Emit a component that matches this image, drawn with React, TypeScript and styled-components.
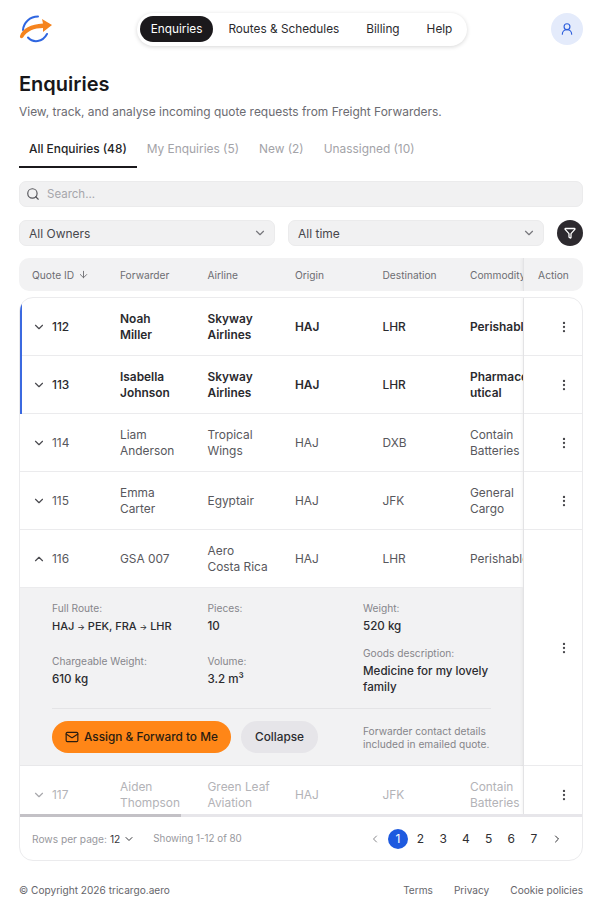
import React from 'react';
import styled, { createGlobalStyle } from 'styled-components';
import { ArrowDown, ChevronDown, ChevronLeft, ChevronRight, ChevronUp, Funnel, Mail, MoreVertical, Search, UserRound } from 'lucide-react';

const GlobalStyle = createGlobalStyle`
  * { box-sizing: border-box; }
  html, body { margin: 0; padding: 0; background: #fff; }
  body { font-family: Inter, "Open Sans", "Liberation Sans", sans-serif; color: #1f1f22; }
  button { font-family: inherit; }
`;

const Page = styled.div`
  width: 602px;
  height: 916px;
  padding: 13px 19px 0;
  overflow: hidden;
`;

const TopBar = styled.header`
  display: flex;
  align-items: center;
  justify-content: space-between;
  height: 32px;
`;

const Logo = styled.svg`
  width: 34px;
  height: 30px;
`;

const Nav = styled.nav`
  display: flex;
  align-items: center;
  height: 33px;
  padding: 0 15px 0 3px;
  background: #fff;
  border-radius: 17px;
  box-shadow: 0 1px 4px rgba(0, 0, 0, 0.16);
`;

const NavItem = styled.a<{ $active?: boolean }>`
  display: flex;
  align-items: center;
  height: 26px;
  padding: 0 11px;
  margin-right: ${({ $active }) => ($active ? '4px' : '5px')};
  border-radius: 13px;
  font-size: 11.8px;
  background: ${({ $active }) => ($active ? '#1b191c' : 'transparent')};
  color: ${({ $active }) => ($active ? '#fff' : '#2b2b2e')};
  &:last-child { margin-right: 0; padding-right: 0; }
`;

const Avatar = styled.div`
  display: flex;
  align-items: center;
  justify-content: center;
  width: 32px;
  height: 32px;
  border-radius: 50%;
  background: #e4ebfb;
  color: #2f5fdc;
`;

const Title = styled.h1`
  margin: 25px 0 0;
  font-size: 20px;
  line-height: 28px;
  font-weight: 600;
  color: #17171a;
`;

const Subtitle = styled.p`
  margin: 5px 0 0;
  font-size: 11.95px;
  line-height: 18px;
  color: #6c6c72;
`;

const Tabs = styled.div`
  display: flex;
  margin-top: 7px;
`;

const Tab = styled.div<{ $active?: boolean }>`
  height: 40px;
  padding: 11px 10px 0;
  line-height: 20px;
  font-size: 11.9px;
  border-bottom: 2px solid ${({ $active }) => ($active ? '#1b191c' : 'transparent')};
  color: ${({ $active }) => ($active ? '#232326' : '#a3a3a8')};
  font-weight: ${({ $active }) => ($active ? 500 : 400)};
`;

const SearchBox = styled.div`
  display: flex;
  align-items: center;
  gap: 7px;
  height: 26px;
  margin-top: 13px;
  padding: 0 6px;
  background: #f1f1f2;
  border: 1px solid #ebebec;
  border-radius: 7px;
  font-size: 11.5px;
  color: #a6a6ab;
  svg { color: #56565b; }
`;

const Filters = styled.div`
  display: flex;
  align-items: center;
  gap: 13px;
  margin-top: 13px;
`;

const SelectBox = styled.div`
  display: flex;
  flex: 0 0 256px;
  align-items: center;
  justify-content: space-between;
  height: 26px;
  padding: 0 7px 0 9px;
  background: #f1f1f2;
  border: 1px solid #ebebec;
  border-radius: 7px;
  font-size: 12px;
  color: #47474c;
  svg { color: #77777c; }
`;

const FilterButton = styled.button`
  display: flex;
  align-items: center;
  justify-content: center;
  width: 26px;
  height: 26px;
  padding: 0;
  border: none;
  border-radius: 50%;
  background: #2d2a2f;
  color: #fff;
`;

const HeaderBar = styled.div`
  display: flex;
  height: 33px;
  margin-top: 12px;
  background: #f2f2f3;
  border-radius: 10px;
  overflow: hidden;
`;

const HeaderScroll = styled.div`
  flex: 1;
  overflow: hidden;
  padding-left: 1px;
`;

const Columns = styled.div`
  display: grid;
  grid-template-columns: 88px repeat(5, 87.5px);
  width: 525.5px;
`;

const HeaderCell = styled.div`
  display: flex;
  align-items: center;
  gap: 4px;
  height: 33px;
  padding-left: 12px;
  font-size: 10.2px;
  color: #6d6d72;
  white-space: nowrap;
`;

const ActionHeader = styled.div`
  display: flex;
  flex: 0 0 60px;
  align-items: center;
  justify-content: center;
  border-left: 1px solid #e3e3e5;
  font-size: 10.2px;
  color: #6d6d72;
  box-shadow: -1px 0 3px rgba(0, 0, 0, 0.05);
`;

const Card = styled.section`
  margin-top: 6px;
  height: 564px;
  background: #fff;
  border: 1px solid #ebebed;
  border-radius: 14px;
  overflow: hidden;
`;

const TableArea = styled.div`
  display: flex;
  height: 516px;
  overflow: hidden;
`;

const TableMain = styled.div`
  flex: 0 0 503px;
  overflow: hidden;
`;

const Row = styled(Columns)<{ $unread?: boolean }>`
  position: relative;
  height: 58px;
  padding-top: 1px;
  align-items: center;
  border-bottom: 1px solid #ebebed;
  &::before {
    content: '';
    display: ${({ $unread }) => ($unread ? 'block' : 'none')};
    position: absolute;
    left: 0;
    top: 0;
    bottom: -1px;
    width: 2px;
    background: #3b69e0;
  }
`;

const Cell = styled.div<{ $weight?: number; $faded?: boolean }>`
  padding-left: 12px;
  font-size: 11.9px;
  line-height: 16px;
  white-space: nowrap;
  font-weight: ${({ $weight }) => $weight ?? 400};
  color: ${({ $weight, $faded }) => ($faded ? '#b3b3b7' : $weight ? '#2a2a2e' : '#58585d')};
`;

const IdCell = styled(Cell)`
  display: flex;
  align-items: center;
  gap: 6px;
  svg { color: ${({ $faded }) => ($faded ? '#a8a8ac' : '#4a4a4f')}; }
`;

const Panel = styled.div`
  width: 503px;
  height: 178px;
  padding: 12px 32px 0;
  background: #f2f2f3;
  border-bottom: 1px solid #e8e8ea;
`;

const DetailGrid = styled.div`
  display: grid;
  grid-template-columns: repeat(3, 128px);
  column-gap: 27.5px;
  row-gap: 11px;
  align-items: center;
`;

const DetailLabel = styled.div`
  font-size: 10.2px;
  line-height: 16px;
  color: #86868b;
`;

const DetailValue = styled.div`
  margin-top: 2px;
  font-size: 11.6px;
  line-height: 16px;
  font-weight: 500;
  color: #2b2b2f;
  white-space: nowrap;
`;

const RouteText = styled.span`
  font-size: 11px;
`;

const RouteArrow = styled.span`
  font-size: 8px;
  line-height: 0;
`;

const Divider = styled.div`
  height: 1px;
  margin: 13px 0 12px;
  background: #e4e4e6;
`;

const ActionsRow = styled(DetailGrid)`
  height: 32px;
`;

const ButtonGroup = styled.div`
  grid-column: span 2;
  display: flex;
  gap: 10px;
`;

const PrimaryButton = styled.button`
  display: flex;
  align-items: center;
  gap: 5px;
  width: 179px;
  height: 32px;
  padding: 0 0 0 13px;
  border: none;
  border-radius: 16px;
  background: #ff8617;
  color: #2a1c10;
  font-size: 11.8px;
  font-weight: 500;
  white-space: nowrap;
`;

const SecondaryButton = styled.button`
  width: 77px;
  height: 32px;
  padding: 0;
  border: none;
  border-radius: 16px;
  background: #e6e5e9;
  color: #2b2b2f;
  font-size: 11.8px;
  font-weight: 500;
`;

const Note = styled.div`
  padding-top: 1px;
  font-size: 10.2px;
  line-height: 13px;
  color: #85858a;
  white-space: nowrap;
`;

const ActionColumn = styled.div`
  flex: 0 0 60px;
  border-left: 1px solid #e3e3e5;
  box-shadow: -1px 0 3px rgba(0, 0, 0, 0.05);
`;

const ActionCell = styled.div<{ $height: number }>`
  display: flex;
  flex: none;
  align-items: center;
  justify-content: flex-end;
  height: ${({ $height }) => $height}px;
  padding-right: 12px;
  border-bottom: 1px solid #ebebed;
  color: #4a4a4e;
`;

const ScrollTrack = styled.div`
  height: 3px;
  background: #e7e6ea;
`;

const ScrollThumb = styled.div`
  width: 161px;
  height: 3px;
  background: #c3c1c6;
`;

const CardFooter = styled.div`
  display: flex;
  align-items: center;
  height: 43px;
  padding: 0 14px 0 12px;
  font-size: 10.2px;
  color: #98989d;
`;

const RowsPerPage = styled.div`
  display: flex;
  align-items: center;
  gap: 3px;
  strong { font-weight: 400; color: #37373b; }
  svg { color: #37373b; }
`;

const Showing = styled.div`
  margin-left: 18px;
  font-size: 9.8px;
`;

const Pagination = styled.div`
  display: flex;
  align-items: center;
  margin-left: auto;
`;

const PageLink = styled.div<{ $active?: boolean; $muted?: boolean }>`
  display: flex;
  align-items: center;
  justify-content: center;
  width: 22.7px;
  height: 20px;
  font-size: 12px;
  color: ${({ $active, $muted }) => ($active ? '#fff' : $muted ? '#88888c' : '#2f2f33')};
  span {
    display: flex;
    align-items: center;
    justify-content: center;
    width: 20px;
    height: 20px;
    border-radius: 50%;
    background: ${({ $active }) => ($active ? '#1e5adf' : 'transparent')};
  }
`;

const SiteFooter = styled.footer`
  display: flex;
  align-items: center;
  justify-content: space-between;
  margin-top: 21px;
  height: 16px;
  font-size: 10.1px;
  color: #66666b;
`;

const FooterLinks = styled.div`
  display: flex;
  gap: 21px;
`;

type Enquiry = {
  id: number;
  forwarder: string[];
  airline: string[];
  dest: string;
  commodity: string[];
  bold?: boolean;
  faded?: boolean;
  open?: boolean;
};

const enquiries: Enquiry[] = [
  { id: 112, forwarder: ['Noah', 'Miller'], airline: ['Skyway', 'Airlines'], dest: 'LHR', commodity: ['Perishable'], bold: true },
  { id: 113, forwarder: ['Isabella', 'Johnson'], airline: ['Skyway', 'Airlines'], dest: 'LHR', commodity: ['Pharmaceu', 'utical'], bold: true },
  { id: 114, forwarder: ['Liam', 'Anderson'], airline: ['Tropical', 'Wings'], dest: 'DXB', commodity: ['Contain', 'Batteries'] },
  { id: 115, forwarder: ['Emma', 'Carter'], airline: ['Egyptair'], dest: 'JFK', commodity: ['General', 'Cargo'] },
  { id: 116, forwarder: ['GSA 007'], airline: ['Aero', 'Costa Rica'], dest: 'LHR', commodity: ['Perishable'], open: true },
  { id: 117, forwarder: ['Aiden', 'Thompson'], airline: ['Green Leaf', 'Aviation'], dest: 'JFK', commodity: ['Contain', 'Batteries'], faded: true },
];

const Lines = ({ lines }: { lines: string[] }) => (
  <>
    {lines.map((line) => (
      <div key={line}>{line}</div>
    ))}
  </>
);

const EnquiryRow = ({ item }: { item: Enquiry }) => {
  const weight = item.bold ? 600 : undefined;
  return (
    <Row $unread={item.bold}>
      <IdCell $weight={item.bold ? 500 : undefined} $faded={item.faded}>
        {item.open ? <ChevronUp size={14} /> : <ChevronDown size={14} />}
        {item.id}
      </IdCell>
      <Cell $weight={weight} $faded={item.faded}><Lines lines={item.forwarder} /></Cell>
      <Cell $weight={weight} $faded={item.faded}><Lines lines={item.airline} /></Cell>
      <Cell $weight={weight} $faded={item.faded}>HAJ</Cell>
      <Cell $weight={item.bold ? 500 : undefined} $faded={item.faded}>{item.dest}</Cell>
      <Cell $weight={weight} $faded={item.faded}><Lines lines={item.commodity} /></Cell>
    </Row>
  );
};

const Detail = ({ label, children }: { label: string; children: React.ReactNode }) => (
  <div>
    <DetailLabel>{label}</DetailLabel>
    <DetailValue>{children}</DetailValue>
  </div>
);

export default function App() {
  return (
    <Page>
      <GlobalStyle />
      <TopBar>
        <Logo viewBox="0 0 34 30" fill="none">
          <path d="M4 16C4.5 8.5 11 2.5 19 2.5" stroke="#2f66e0" strokeWidth="2" strokeLinecap="round" />
          <path d="M9 23.5C14 29 23.5 28.5 28 20" stroke="#2f66e0" strokeWidth="2" strokeLinecap="round" />
          <path d="M1 22C3 15 12 10 24 9.5L23 5L33 11L24 18L24 14C15 14 8 17 4 23.5C2.5 25 0.5 24 1 22Z" fill="#f5841f" />
        </Logo>
        <Nav>
          <NavItem $active>Enquiries</NavItem>
          <NavItem>Routes &amp; Schedules</NavItem>
          <NavItem>Billing</NavItem>
          <NavItem>Help</NavItem>
        </Nav>
        <Avatar>
          <UserRound size={14} />
        </Avatar>
      </TopBar>

      <Title>Enquiries</Title>
      <Subtitle>View, track, and analyse incoming quote requests from Freight Forwarders.</Subtitle>

      <Tabs>
        <Tab $active>All Enquiries (48)</Tab>
        <Tab>My Enquiries (5)</Tab>
        <Tab>New (2)</Tab>
        <Tab>Unassigned (10)</Tab>
      </Tabs>

      <SearchBox>
        <Search size={14} />
        Search...
      </SearchBox>

      <Filters>
        <SelectBox>
          All Owners
          <ChevronDown size={14} />
        </SelectBox>
        <SelectBox>
          All time
          <ChevronDown size={14} />
        </SelectBox>
        <FilterButton>
          <Funnel size={12} strokeWidth={2.6} />
        </FilterButton>
      </Filters>

      <HeaderBar>
        <HeaderScroll>
          <Columns>
            <HeaderCell>Quote ID <ArrowDown size={11} /></HeaderCell>
            <HeaderCell>Forwarder</HeaderCell>
            <HeaderCell>Airline</HeaderCell>
            <HeaderCell>Origin</HeaderCell>
            <HeaderCell>Destination</HeaderCell>
            <HeaderCell>Commodity</HeaderCell>
          </Columns>
        </HeaderScroll>
        <ActionHeader>Action</ActionHeader>
      </HeaderBar>

      <Card>
        <TableArea>
          <TableMain>
            {enquiries.map((item) => (
              <React.Fragment key={item.id}>
                <EnquiryRow item={item} />
                {item.open && (
                  <Panel>
                    <DetailGrid>
                      <Detail label="Full Route:">
                        <RouteText>HAJ <RouteArrow>→</RouteArrow> PEK, FRA <RouteArrow>→</RouteArrow> LHR</RouteText>
                      </Detail>
                      <Detail label="Pieces:">10</Detail>
                      <Detail label="Weight:">520 kg</Detail>
                      <Detail label="Chargeable Weight:">610 kg</Detail>
                      <Detail label="Volume:">3.2 m³</Detail>
                      <Detail label="Goods description:">
                        Medicine for my lovely
                        <br />
                        family
                      </Detail>
                    </DetailGrid>
                    <Divider />
                    <ActionsRow>
                      <ButtonGroup>
                        <PrimaryButton>
                          <Mail size={14} />
                          Assign &amp; Forward to Me
                        </PrimaryButton>
                        <SecondaryButton>Collapse</SecondaryButton>
                      </ButtonGroup>
                      <Note>
                        Forwarder contact details
                        <br />
                        included in emailed quote.
                      </Note>
                    </ActionsRow>
                  </Panel>
                )}
              </React.Fragment>
            ))}
          </TableMain>
          <ActionColumn>
            {[58, 58, 58, 58, 236, 58].map((height, i) => (
              <ActionCell key={i} $height={height}>
                <MoreVertical size={14} />
              </ActionCell>
            ))}
          </ActionColumn>
        </TableArea>

        <ScrollTrack>
          <ScrollThumb />
        </ScrollTrack>

        <CardFooter>
          <RowsPerPage>
            Rows per page: <strong>12</strong>
            <ChevronDown size={12} />
          </RowsPerPage>
          <Showing>Showing 1-12 of 80</Showing>
          <Pagination>
            <PageLink $muted><ChevronLeft size={12} /></PageLink>
            {[1, 2, 3, 4, 5, 6, 7].map((n) => (
              <PageLink key={n} $active={n === 1}><span>{n}</span></PageLink>
            ))}
            <PageLink><ChevronRight size={12} /></PageLink>
          </Pagination>
        </CardFooter>
      </Card>

      <SiteFooter>
        <div>© Copyright 2026 tricargo.aero</div>
        <FooterLinks>
          <span>Terms</span>
          <span>Privacy</span>
          <span>Cookie policies</span>
        </FooterLinks>
      </SiteFooter>
    </Page>
  );
}
